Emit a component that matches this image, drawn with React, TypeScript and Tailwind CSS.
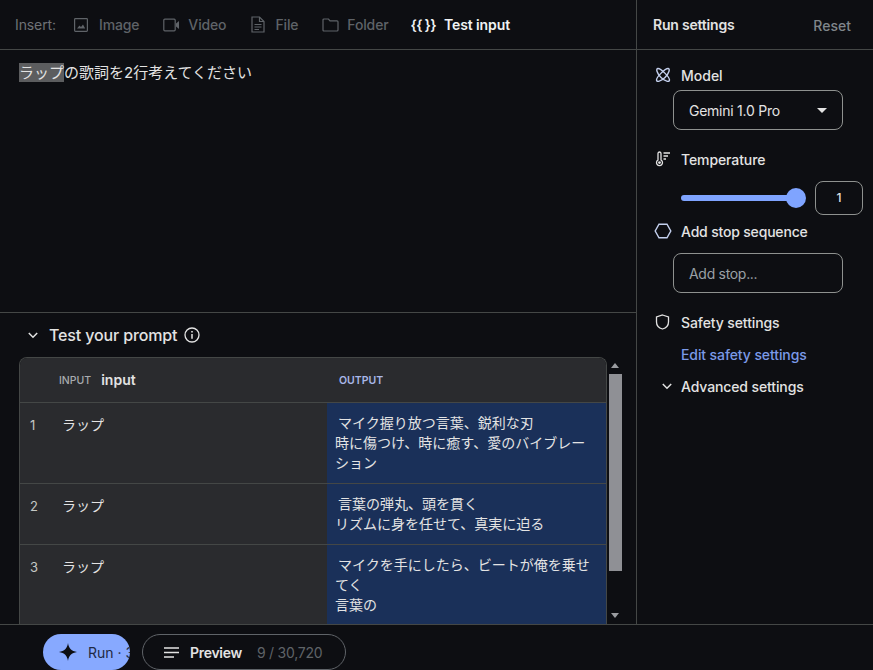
import React from "react";

const font = { fontFamily: 'Inter, "Noto Sans CJK JP", sans-serif' };

function ImageIcon() {
  return (
    <svg width="16" height="16" viewBox="0 0 16 16" fill="none" stroke="#5f6368" strokeWidth="1.2">
      <rect x="1.6" y="1.6" width="12.8" height="12.8" rx="0.8" />
      <path d="M4 11.5 L6.5 8.5 L8 10 L10 7.5 L12.2 11.5 Z" fill="#5f6368" stroke="none" />
    </svg>
  );
}
function VideoIcon() {
  return (
    <svg width="17" height="14" viewBox="0 0 17 14" fill="none" stroke="#5f6368" strokeWidth="1.2">
      <rect x="0.8" y="1.2" width="11.4" height="11.6" rx="1" />
      <path d="M13 5.5 L16 3 V11 L13 8.5 Z" fill="#5f6368" stroke="none" />
    </svg>
  );
}
function FileIcon() {
  return (
    <svg width="14" height="17" viewBox="0 0 14 17" fill="none" stroke="#5f6368" strokeWidth="1.2">
      <path d="M1 1 H8.5 L13 5.5 V16 H1 Z" />
      <path d="M8.5 1 V5.5 H13 M3.5 8.5 H10.5 M3.5 11 H10.5 M3.5 13.5 H8" />
    </svg>
  );
}
function FolderIcon() {
  return (
    <svg width="17" height="14" viewBox="0 0 17 14" fill="none" stroke="#5f6368" strokeWidth="1.2">
      <path d="M1 2 Q1 1 2 1 H6.5 L8 2.8 H15 Q16 2.8 16 3.8 V12 Q16 13 15 13 H2 Q1 13 1 12 Z" />
    </svg>
  );
}
function Chevron({ className }: { className?: string }) {
  return (
    <svg className={className} width="10" height="7" viewBox="0 0 10 7" fill="none" stroke="#e3e3e3" strokeWidth="1.5">
      <path d="M0.8 1 L5 5.2 L9.2 1" />
    </svg>
  );
}

function InsertItem({ icon, label, gap }: { icon: React.ReactNode; label: string; gap: string }) {
  return (
    <div className={`flex items-center ${gap}`}>
      {icon}
      <span className="text-[14px] font-medium text-[#5f6368] tracking-[-0.15px]">{label}</span>
    </div>
  );
}

function Row({
  n,
  rowClass,
  lines,
}: {
  n: number;
  rowClass: string;
  lines: string[];
}) {
  return (
    <div className={`flex border-b border-[#444746] ${rowClass}`}>
      <div className="w-[307px] flex shrink-0 pt-[12px] text-[14px] leading-[20px] text-[#e3e3e3] bg-[#2a2b2e]">
        <span className="w-[42px] pl-[10px] text-[#c4c7c5] text-[13px]">{n}</span>
        <span>ラップ</span>
      </div>
      <div className="flex-1 bg-[#1a3059] pl-[8px] pr-[12px] pt-[10px] text-[14px] leading-[20px] text-[#e3e3e3]">
        {lines.map((l, i) => (
          <div key={i} className="whitespace-nowrap first:pl-[3px]">{l}</div>
        ))}
      </div>
    </div>
  );
}

export default function App() {
  return (
    <div style={font} className="w-[873px] h-[670px] overflow-hidden flex flex-col bg-[#0d0e12] text-[#e3e3e3]">
      <div className="flex flex-1 min-h-0">
        {/* Left */}
        <div className="w-[637px] shrink-0 flex flex-col border-r border-[#444746]">
          <div className="h-[50px] shrink-0 flex items-center pl-[15px] border-b border-[#444746]">
            <span className="text-[14px] text-[#6f7276] mr-[17px] tracking-[-0.1px]">Insert:</span>
            <div className="flex items-center">
              <InsertItem icon={<ImageIcon />} label="Image" gap="gap-[10px]" />
              <div className="w-[24px]" />
              <InsertItem icon={<VideoIcon />} label="Video" gap="gap-[8px]" />
              <div className="w-[25px]" />
              <InsertItem icon={<FileIcon />} label="File" gap="gap-[10px]" />
              <div className="w-[24px]" />
              <InsertItem icon={<FolderIcon />} label="Folder" gap="gap-[8px]" />
              <div className="w-[22px]" />
              <div className="flex items-center gap-[8px] text-[14px] font-semibold text-[#f1f3f4]">
                <span className="tracking-[-0.7px]">{"{{ }}"}</span>
                <span className="tracking-[-0.1px]">Test input</span>
              </div>
            </div>
          </div>
          <div className="h-[263px] shrink-0 border-b border-[#444746] pl-[19px] pt-[13px] text-[15px] leading-[20px] text-[#e3e3e3]">
            <span className="bg-[#5c5d5f]">ラップ</span>の歌詞を2行考えてください
          </div>
          <div className="flex-1 min-h-0 flex flex-col">
            <div className="h-[44px] shrink-0 flex items-center pl-[28px]">
              <Chevron className="mr-[11px]" />
              <span className="text-[16px] font-medium text-[#e3e3e3] mr-[7px] tracking-[-0.14px]">Test your prompt</span>
              <svg width="16" height="16" viewBox="0 0 16 16" fill="none" stroke="#e3e3e3" strokeWidth="1.3">
                <circle cx="8" cy="8" r="7" />
                <path d="M8 7 V11.8" strokeWidth="1.5" />
                <path d="M8 4 V5.6" strokeWidth="1.6" />
              </svg>
            </div>
            <div className="flex-1 min-h-0 flex pl-[19px]">
              <div className="w-[588px] shrink-0 border border-b-0 border-[#444746] rounded-t-[8px] overflow-hidden flex flex-col">
                <div className="h-[45px] shrink-0 flex items-center bg-[#2a2b2e] border-b border-[#444746]">
                  <div className="w-[307px] flex items-center pl-[39px]">
                    <span className="text-[10.5px] font-medium text-[#a8abae] mr-[10px] pt-[1px]">INPUT</span>
                    <span className="text-[14px] font-semibold text-[#e3e3e3] pb-[1px]">input</span>
                  </div>
                  <span className="pl-[12px] pt-[1px] text-[10.5px] font-semibold text-[#a8b7e8]">OUTPUT</span>
                </div>
                <Row n={1} rowClass="h-[81px] shrink-0" lines={["マイク握り放つ言葉、鋭利な刃", "時に傷つけ、時に癒す、愛のバイブレー", "ション"]} />
                <Row n={2} rowClass="h-[61px] shrink-0" lines={["言葉の弾丸、頭を貫く", "リズムに身を任せて、真実に迫る"]} />
                <Row n={3} rowClass="h-[80px] shrink-0 border-b-0" lines={["マイクを手にしたら、ビートが俺を乗せ", "てく", "言葉の"]} />
              </div>
              <div className="w-[16px] shrink-0 flex flex-col items-center">
                <div className="h-[17px] shrink-0 flex items-center justify-center">
                  <svg width="8" height="5" viewBox="0 0 8 5"><path d="M4 0 L8 5 H0 Z" fill="#9a9ca0" /></svg>
                </div>
                <div className="w-[13px] h-[197px] shrink-0 bg-[#8f9095]" />
                <div className="flex-1 flex items-end justify-center pb-[6px]">
                  <svg width="8" height="5" viewBox="0 0 8 5"><path d="M0 0 H8 L4 5 Z" fill="#9a9ca0" /></svg>
                </div>
              </div>
            </div>
          </div>
        </div>

        {/* Right */}
        <div className="flex-1 min-w-0 flex flex-col">
          <div className="h-[50px] shrink-0 flex items-center justify-between pl-[16px] pr-[22px] border-b border-[#444746]">
            <span className="text-[14px] font-semibold text-[#e3e3e3] tracking-[-0.2px]">Run settings</span>
            <span className="text-[14px] font-medium text-[#80868b] pt-[1px]">Reset</span>
          </div>
          <div className="pl-[18px] pt-[15px] flex flex-col">
            <div className="flex items-center h-[20px]">
              <svg className="mr-[10px]" width="16" height="16" viewBox="0 0 16 16" fill="none" stroke="#c4d0ee" strokeWidth="1.4">
                <path d="M3 1.5 C6 1.5 14.5 10 14.5 13 C14.5 15.5 10 14.5 6 10.5 C2 6.5 0.5 1.5 3 1.5 Z" />
                <path d="M13 1.5 C10 1.5 1.5 10 1.5 13 C1.5 15.5 6 14.5 10 10.5 C14 6.5 15.5 1.5 13 1.5 Z" />
              </svg>
              <span className="text-[14px] font-medium text-[#e3e3e3]">Model</span>
            </div>
            <div className="ml-[18px] mt-[5px] w-[170px] h-[40px] border border-[#8e918f] rounded-[8px] flex items-center justify-between pl-[15px] pr-[15px]">
              <span className="text-[14px] text-[#e3e3e3] tracking-[-0.25px]">Gemini 1.0 Pro</span>
              <svg width="10" height="5" viewBox="0 0 10 5"><path d="M0 0 H10 L5 5 Z" fill="#e3e3e3" /></svg>
            </div>
            <div className="flex items-center h-[20px] mt-[19px]">
              <svg className="mr-[10px]" width="16" height="16" viewBox="0 0 16 16" fill="none" stroke="#e3e3e3" strokeWidth="1.3">
                <path d="M3 2.5 a1.5 1.5 0 0 1 3 0 V9 a3 3 0 1 1 -3 0 Z" />
                <circle cx="4.5" cy="11.6" r="1.4" fill="#e3e3e3" stroke="none" />
                <path d="M8.5 2 H15 M8.5 5 H13 M8.5 8 H11" strokeWidth="1.4" />
              </svg>
              <span className="text-[14px] font-medium text-[#e3e3e3] tracking-[-0.1px]">Temperature</span>
            </div>
            <div className="flex items-center mt-[12px]">
              <div className="ml-[26px] w-[115px] h-[6px] rounded-full bg-[#7fa4ff] relative">
                <div className="absolute right-[-10px] top-[-7px] w-[20px] h-[20px] rounded-full bg-[#7fa4ff]" />
              </div>
              <div className="ml-[19px] w-[48px] h-[34px] border border-[#8e918f] rounded-[8px] flex items-center justify-center text-[12px] font-medium text-[#e3e3e3]">
                1
              </div>
            </div>
            <div className="flex items-center h-[20px] mt-[6px]">
              <svg className="mr-[9px] -ml-[1px]" width="18" height="16" viewBox="0 0 18 16" fill="none" stroke="#c4d0ee" strokeWidth="1.4">
                <path d="M5 1.2 H13 L16.8 8 L13 14.8 H5 L1.2 8 Z" />
              </svg>
              <span className="text-[14px] font-medium text-[#e3e3e3] tracking-[-0.18px]">Add stop sequence</span>
            </div>
            <div className="ml-[18px] mt-[12px] w-[170px] h-[40px] border border-[#8e918f] rounded-[8px] flex items-center pl-[15px]">
              <span className="text-[14px] text-[#9aa0a6] tracking-[-0.3px]">Add stop...</span>
            </div>
            <div className="flex items-center h-[20px] mt-[19px]">
              <svg className="mr-[11px]" width="15" height="16" viewBox="0 0 15 16" fill="none" stroke="#e3e3e3" strokeWidth="1.3">
                <path d="M7.5 1 L13.5 3 V8 C13.5 11.5 11 14 7.5 15 C4 14 1.5 11.5 1.5 8 V3 Z" />
              </svg>
              <span className="text-[14px] font-medium text-[#e3e3e3] tracking-[-0.1px]">Safety settings</span>
            </div>
            <span className="ml-[26px] mt-[13px] leading-[20px] text-[14px] font-medium text-[#7b9ae8] tracking-[-0.1px]">Edit safety settings</span>
            <div className="flex items-center h-[20px] mt-[11px]">
              <Chevron className="ml-[7px] mr-[9px]" />
              <span className="text-[14px] font-medium text-[#e3e3e3] tracking-[-0.12px]">Advanced settings</span>
            </div>
          </div>
        </div>
      </div>

      {/* Bottom */}
      <div className="h-[46px] shrink-0 border-t border-[#444746] flex items-start pt-[9px] pl-[43px]">
        <div className="w-[87px] h-[36px] rounded-full bg-[#87a9ff] flex items-center overflow-hidden pl-[15px] shrink-0">
          <svg width="20" height="20" viewBox="0 0 20 20" className="shrink-0">
            <path d="M10 1 C10.8 6.5 13.5 9.2 19 10 C13.5 10.8 10.8 13.5 10 19 C9.2 13.5 6.5 10.8 1 10 C6.5 9.2 9.2 6.5 10 1 Z" fill="#0d0e12" />
          </svg>
          <span className="ml-[10px] text-[14px] text-[#1f2a44] whitespace-nowrap">Run · 3</span>
        </div>
        <div className="ml-[12px] w-[204px] h-[36px] rounded-full border border-[#5f6368] flex items-center pl-[21px]">
          <svg width="15" height="11" viewBox="0 0 15 11" stroke="#e3e3e3" strokeWidth="1.6">
            <path d="M0 1 H15 M0 5.5 H15 M0 10 H10" />
          </svg>
          <span className="ml-[11px] text-[14px] font-semibold text-[#e3e3e3] tracking-[-0.3px]">Preview</span>
          <span className="ml-[15px] text-[14px] text-[#5f6368] tracking-[-0.25px]">9 / 30,720</span>
        </div>
      </div>
    </div>
  );
}
